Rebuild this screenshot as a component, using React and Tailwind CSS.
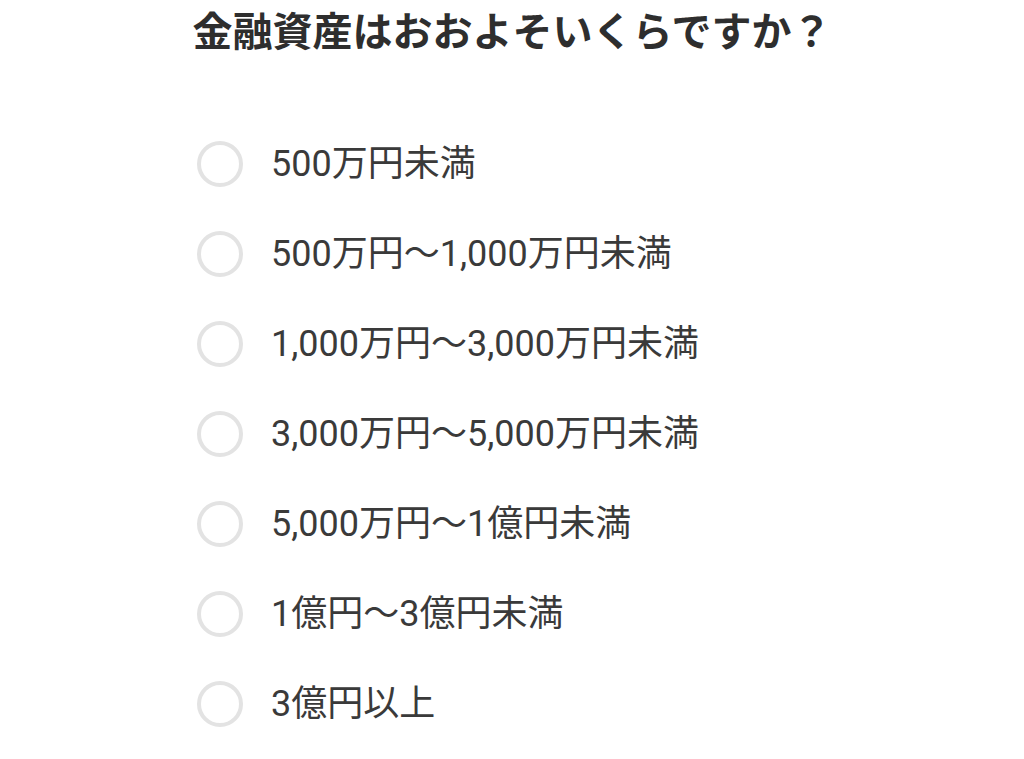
import React from "react";

const options = [
  "500万円未満",
  "500万円〜1,000万円未満",
  "1,000万円〜3,000万円未満",
  "3,000万円〜5,000万円未満",
  "5,000万円〜1億円未満",
  "1億円〜3億円未満",
  "3億円以上",
];

export default function App() {
  return (
    <div
      className="min-h-[759px] bg-white text-[#333]"
      style={{ fontFamily: 'Roboto, "Noto Sans CJK JP", sans-serif' }}
    >
      <h1 className="whitespace-nowrap pt-[5px] text-center text-[40px] font-bold leading-[55px] text-[#2e2e2e]">
        金融資産はおおよそいくらですか？
      </h1>
      <div className="mx-auto w-[630px]">
        <ul className="mt-[59px]">
          {options.map((label) => (
            <li key={label} className="flex h-[90px] items-center gap-[28px]">
              <span className="h-[46px] w-[46px] shrink-0 rounded-full border-[4px] border-[#e3e3e3]" />
              <span className="text-[36px] leading-none text-[#3a3a3a]">{label}</span>
            </li>
          ))}
        </ul>
      </div>
    </div>
  );
}
